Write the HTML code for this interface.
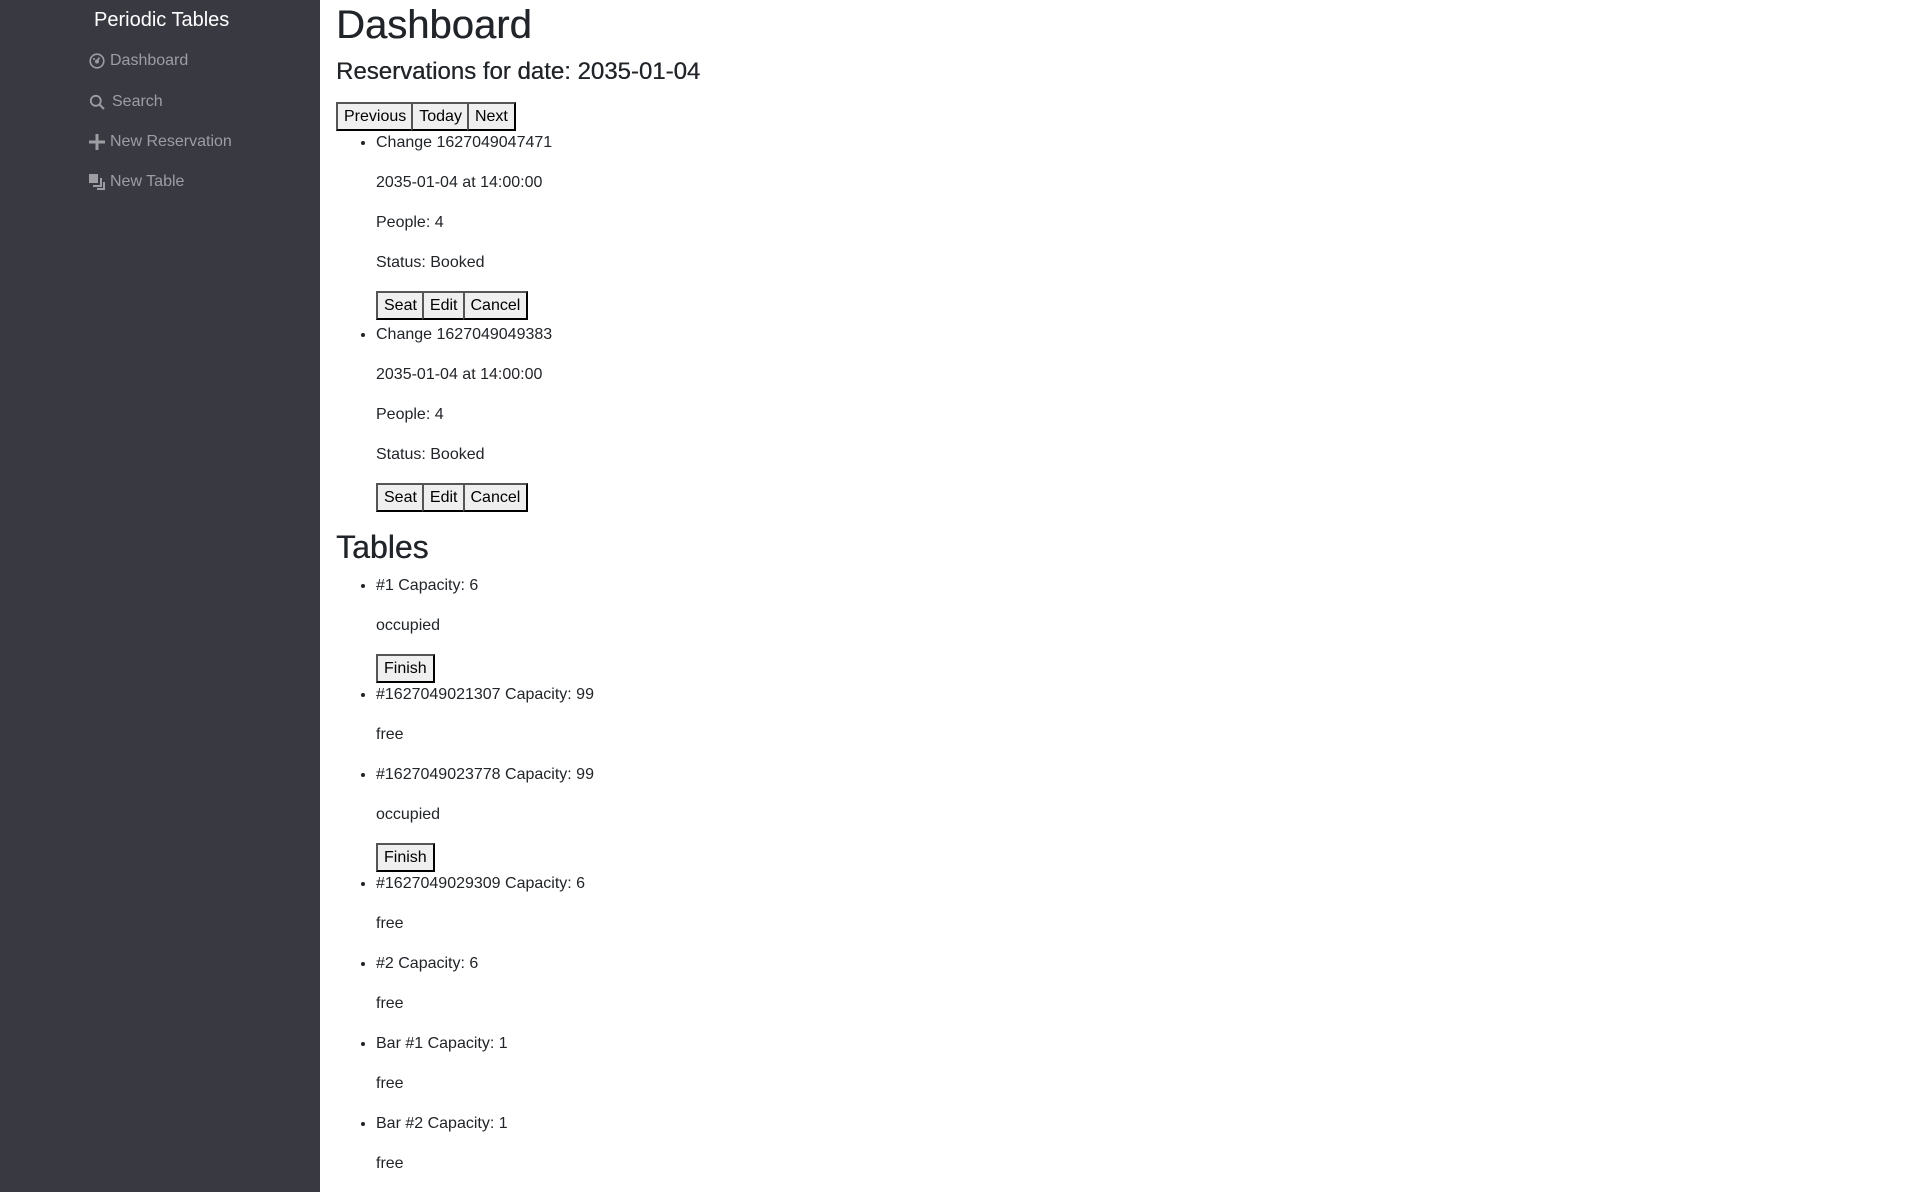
<!DOCTYPE html>
<html><head><meta charset="utf-8"><style>
*{box-sizing:border-box}
html,body{margin:0;padding:0;width:1920px;height:1192px;overflow:hidden;background:#fff}
body{font-family:"Liberation Sans",Arial,sans-serif;font-size:16px;line-height:24px;color:#212529}
.side{position:absolute;left:0;top:0;width:320px;height:1192px;background:#393942}
.brand{position:absolute;left:94px;top:7px;color:#fff;font-size:20px;line-height:26px}
.nav{position:absolute;left:89px;color:#9d9da3;font-size:16px;line-height:24px;white-space:nowrap}
.nav svg{position:absolute;left:0;top:4px}
.nav span{position:absolute;left:21px;top:0}
.main{position:absolute;left:336px;top:1px;width:1560px}
h1{margin:0 0 8px;font-size:40px;line-height:48px;font-weight:500;text-shadow:0.4px 0 0 #212529}
h4{margin:0 0 16px;font-size:24px;line-height:29px;font-weight:500;text-shadow:0.3px 0 0 #212529}
h2{margin:0 0 8px;font-size:32px;line-height:38px;font-weight:500;text-shadow:0.4px 0 0 #212529}
ul{margin:0 0 16px;padding-left:40px}
p{margin:16px 0}
button{font-family:"Liberation Sans",Arial,sans-serif;font-size:16px;line-height:22px;height:29px;padding:1px 6px;margin:0 -3px 0 0;background:#efefef;border:2px outset #555;color:#000;vertical-align:top}
.bg{height:29px}
</style></head><body>
<div class="side">
<div class="brand">Periodic Tables</div>
<div class="nav" style="top:49px"><svg width="16" height="16" viewBox="0 0 16 16"><circle cx="8" cy="8" r="6.8" fill="none" stroke="#9d9da3" stroke-width="1.6"/><circle cx="8" cy="8.5" r="2" fill="#9d9da3"/><path d="M8 8L10.5 4.5" stroke="#9d9da3" stroke-width="1.6"/><circle cx="5" cy="6" r="1" fill="#9d9da3"/></svg><span>Dashboard</span></div>
<div class="nav" style="top:90px"><svg width="16" height="16" viewBox="0 0 16 16"><circle cx="6.8" cy="6.8" r="5" fill="none" stroke="#9d9da3" stroke-width="1.8"/><path d="M10.5 10.5L15 15" stroke="#9d9da3" stroke-width="2"/></svg><span style="left:23px">Search</span></div>
<div class="nav" style="top:130px"><svg width="16" height="16" viewBox="0 0 16 16"><path d="M6.5 0h3v6.5H16v3H9.5V16h-3V9.5H0v-3h6.5z" fill="#9d9da3"/></svg><span>New Reservation</span></div>
<div class="nav" style="top:170px"><svg width="16" height="16" viewBox="0 0 16 16"><rect x="0" y="0" width="9" height="9" fill="#9d9da3"/><path d="M11 4v7H4v2h9V4zM14 8v6H8v2h8V8z" fill="#9d9da3"/></svg><span>New Table</span></div>
</div>
<div class="main">
<h1>Dashboard</h1>
<h4>Reservations for date: 2035-01-04</h4>
<div class="bg"><button>Previous</button><button>Today</button><button>Next</button></div>
<ul>
<li>Change 1627049047471<p>2035-01-04 at 14:00:00</p><p>People: 4</p><p>Status: Booked</p><div class="bg"><button>Seat</button><button>Edit</button><button>Cancel</button></div></li>
<li style="margin-top:3px">Change 1627049049383<p>2035-01-04 at 14:00:00</p><p>People: 4</p><p>Status: Booked</p><div class="bg"><button>Seat</button><button>Edit</button><button>Cancel</button></div></li>
</ul>
<h2>Tables</h2>
<ul>
<li>#1 Capacity: 6<p>occupied</p><div class="bg"><button>Finish</button></div></li>
<li>#1627049021307 Capacity: 99<p>free</p></li>
<li>#1627049023778 Capacity: 99<p>occupied</p><div class="bg"><button>Finish</button></div></li>
<li>#1627049029309 Capacity: 6<p>free</p></li>
<li>#2 Capacity: 6<p>free</p></li>
<li>Bar #1 Capacity: 1<p>free</p></li>
<li>Bar #2 Capacity: 1<p>free</p></li>
</ul>
</div>
</body></html>
